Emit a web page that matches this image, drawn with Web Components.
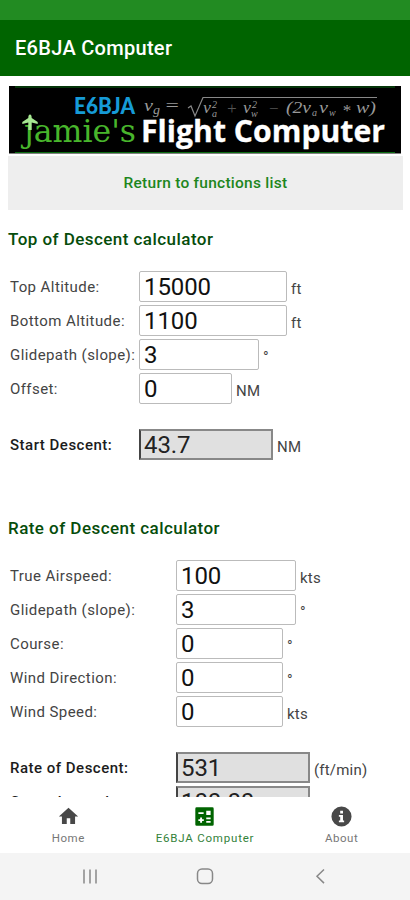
<!DOCTYPE html>
<html lang="en">
<head>
<meta charset="utf-8">
<title>E6BJA Computer</title>
<style>
  body {
    margin: 0;
    background: #fff;
    font-family: Roboto, "Liberation Sans", sans-serif;
  }
</style>
</head>
<body>
<e6b-app>
  <e6b-header slot="header">E6BJA Computer</e6b-header>

  <e6b-banner></e6b-banner>
  <e6b-button>Return to functions list</e6b-button>

  <e6b-calculator style="--label: 131px">
    <span slot="title">Top of Descent calculator</span>
    <e6b-field label="Top Altitude:" unit="ft" size="148">15000</e6b-field>
    <e6b-field label="Bottom Altitude:" unit="ft" size="148">1100</e6b-field>
    <e6b-field label="Glidepath (slope):" unit="°" size="120">3</e6b-field>
    <e6b-field label="Offset:" unit="NM" size="93">0</e6b-field>
    <e6b-field label="Start Descent:" unit="NM" size="134" result>43.7</e6b-field>
  </e6b-calculator>

  <e6b-calculator style="--label: 168px">
    <span slot="title">Rate of Descent calculator</span>
    <e6b-field label="True Airspeed:" unit="kts" size="120">100</e6b-field>
    <e6b-field label="Glidepath (slope):" unit="°" size="120">3</e6b-field>
    <e6b-field label="Course:" unit="°" size="107">0</e6b-field>
    <e6b-field label="Wind Direction:" unit="°" size="107">0</e6b-field>
    <e6b-field label="Wind Speed:" unit="kts" size="107">0</e6b-field>
    <e6b-field label="Rate of Descent:" unit="(ft/min)" size="134" result>531</e6b-field>
    <e6b-field label="Ground speed:" unit="" size="134" result next>100.00</e6b-field>
  </e6b-calculator>

  <e6b-tabs slot="footer">
    <e6b-tab icon="home">Home</e6b-tab>
    <e6b-tab icon="calc" active>E6BJA Computer</e6b-tab>
    <e6b-tab icon="info">About</e6b-tab>
  </e6b-tabs>
  <e6b-system-bar slot="footer"></e6b-system-bar>
</e6b-app>

<script>
const icons = {
  home: `<path d="M10 20.500v-6.500h4v6.500h5.500V12H23L12 2 1 12h3.500v8.500z"/>`,
  calc: `<path fill-rule="evenodd" d="M3 1.500h18a1.500 1.500 0 0 1 1.500 1.500v18a1.500 1.500 0 0 1-1.500 1.500H3A1.500 1.500 0 0 1 1.500 21V3A1.500 1.500 0 0 1 3 1.500z
    M5 7v2.200h6V7zM14 5.500v4.700h5V5.500zM7 13v2H5v2.200h2v2h2.200v-2h2V15h-2v-2zM14 13v2.200h5V13zM14 17v2.200h5V17z"/>`,
  info: `<path d="M12 .5a11.500 11.500 0 1 0 0 23 11.500 11.500 0 0 0 0-23zm-1.500 5h3.200v3h-3.200zM9 10.300h4.700v6.200H15v2H9v-2h1.500v-4.200H9z"/>`
};

class App extends HTMLElement {
  constructor() {
    super();
    this.attachShadow({ mode: "open" });
    this.shadowRoot.innerHTML = `
    <style>
        :host {
            display: flex;
            flex-direction: column;
            height: 900px;
            overflow: hidden;
        }
        main {
            flex: 1;
            min-height: 0;
            overflow: hidden;
            padding: 10px 7px 0 8px;
            box-sizing: border-box;
        }
    </style>
    <slot name="header"></slot>
    <main><slot></slot></main>
    <slot name="footer"></slot>
    `;
  }
}

class Header extends HTMLElement {
  constructor() {
    super();
    this.attachShadow({ mode: "open" });
    this.shadowRoot.innerHTML = `
    <style>
        :host {
            display: block;
            flex: none;
            border-top: 20px solid #228b22;
            background: #006400;
            color: #fff;
        }
        h1 {
            margin: 0;
            padding: 1px 15px 0;
            font-size: 20px;
            font-weight: 500;
            line-height: 55px;
            letter-spacing: 0.3px;
        }
    </style>
    <h1><slot></slot></h1>
    `;
  }
}

class Banner extends HTMLElement {
  constructor() {
    super();
    this.attachShadow({ mode: "open" });
    this.shadowRoot.innerHTML = `
    <style>
        :host { display: block; height: 68px; margin-left: 1px; }
        svg { display: block; }
        .math { font-family: "Liberation Serif", serif; font-style: italic; fill: #999; font-size: 17px; }
        .small { font-size: 10px; }
    </style>
    <svg width="392" height="68" viewBox="9 86 392 68">
      <rect x="9" y="86" width="392" height="67.500" fill="#000"/>
      <path d="M15 87H395M15 152.500H395" stroke="#0b6b12" stroke-width="1.200"/>
      <text x="74" y="114" font-family="Lato" font-weight="900" font-size="22" fill="#169bd7" textLength="61" lengthAdjust="spacingAndGlyphs">E6BJA</text>
      <g class="math">
        <text x="144" y="110.500" textLength="9" lengthAdjust="spacingAndGlyphs">v</text>
        <text x="153" y="114" font-size="12" textLength="7" lengthAdjust="spacingAndGlyphs">g</text>
        <text x="164" y="111" textLength="16" lengthAdjust="spacingAndGlyphs">=</text>
        <path d="M188 108l3-2 4 10 8-18.500H377" fill="none" stroke="#888" stroke-width="1.200"/>
        <text x="203" y="113" textLength="8" lengthAdjust="spacingAndGlyphs">v</text>
        <text x="212" y="108" class="small">2</text>
        <text x="212" y="117" class="small">a</text>
        <text x="226" y="114" fill="#555">+</text>
        <text x="243" y="113" textLength="8" lengthAdjust="spacingAndGlyphs">v</text>
        <text x="252" y="108" class="small">2</text>
        <text x="251" y="117" class="small">w</text>
        <text x="268" y="114" fill="#555">−</text>
        <text x="286" y="113" textLength="25" lengthAdjust="spacingAndGlyphs">(2v</text>
        <text x="312" y="116" class="small">a</text>
        <text x="319" y="113" textLength="9" lengthAdjust="spacingAndGlyphs">v</text>
        <text x="329" y="116" class="small">w</text>
        <text x="342" y="116">*</text>
        <text x="356" y="113" textLength="20" lengthAdjust="spacingAndGlyphs">w)</text>
      </g>
      <text x="24" y="141.500" font-family="DejaVu Serif" font-size="31" fill="#48b52c" textLength="112" lengthAdjust="spacingAndGlyphs">jamie's</text>
      <rect x="22" y="113" width="12" height="10" fill="#000"/>
      <path d="M30 114.500c1.200 0 1.700 1.500 1.700 3.500l6 4v2l-6-1.500V130h-3.400v-7.500l-6 1.500v-2l6-4c0-2 .5-3.500 1.700-3.500z" fill="#a7e892"/>
      <text x="141" y="141.500" font-family="Open Sans" font-weight="700" font-size="31" fill="#fff" stroke="#fff" stroke-width="0.300" textLength="244" lengthAdjust="spacingAndGlyphs">Flight Computer</text>
    </svg>
    `;
  }
}

class Button extends HTMLElement {
  constructor() {
    super();
    this.attachShadow({ mode: "open" });
    this.shadowRoot.innerHTML = `
    <style>
        :host {
            display: block;
            margin-top: 2px;
            background: #eee;
            color: #1d861d;
            text-align: center;
            font-size: 15.5px;
            font-weight: 500;
            line-height: 54px;
            letter-spacing: 0.26px;
        }
    </style>
    <slot></slot>
    `;
  }
}

class Calculator extends HTMLElement {
  constructor() {
    super();
    this.attachShadow({ mode: "open" });
    this.shadowRoot.innerHTML = `
    <style>
        :host { display: block; margin-bottom: 39px; }
        h2 {
            margin: 0;
            padding: 19px 0 21px;
            color: #064d0b;
            font-size: 17px;
            font-weight: 500;
            line-height: 21px;
            letter-spacing: 0.45px;
        }
        .rows { display: flex; flex-direction: column; gap: 3px; }
    </style>
    <h2><slot name="title"></slot></h2>
    <div class="rows"><slot></slot></div>
    `;
  }
}

class Field extends HTMLElement {
  constructor() {
    super();
    this.attachShadow({ mode: "open" });
    this.shadowRoot.innerHTML = `
    <style>
        :host {
            display: grid;
            grid-template-columns: var(--label) auto 1fr;
            grid-template-rows: 31px;
            height: 31px;
            color: #444;
            font-size: 15px;
        }
        :host([result]) { margin-top: 22px; }
        :host([next]) { margin-top: 0; }
        label {
            padding-left: 2px;
            line-height: 32px;
            letter-spacing: 0.42px;
            white-space: nowrap;
        }
        :host([result]) label { color: #1c1c1c; font-weight: 500; letter-spacing: 0.5px; }
        .box {
            box-sizing: border-box;
            height: 31px;
            border: 1px solid #bbb;
            border-radius: 2px;
            padding-left: 4px;
            color: #111;
            font-size: 24px;
            line-height: 31px;
            letter-spacing: -0.1px;
            white-space: nowrap;
        }
        :host([result]) .box {
            border: 2px solid #888;
            border-color: #888 #888 #888 #444;
            border-radius: 0;
            padding-left: 3px;
            background: #e0e0e0;
            color: #222;
            line-height: 29px;
        }
        .unit { padding-left: 4px; line-height: 36px; letter-spacing: 0.2px; white-space: nowrap; }
    </style>
    <label>${this.getAttribute("label")}</label>
    <div class="box" style="width: ${this.getAttribute("size")}px"><slot></slot></div>
    <span class="unit">${this.getAttribute("unit")}</span>
    `;
  }
}

class Tabs extends HTMLElement {
  constructor() {
    super();
    this.attachShadow({ mode: "open" });
    this.shadowRoot.innerHTML = `
    <style>
        :host {
            display: grid;
            flex: none;
            grid-template-columns: repeat(3, 1fr);
            height: 56px;
            background: #fff;
        }
    </style>
    <slot></slot>
    `;
  }
}

class Tab extends HTMLElement {
  constructor() {
    super();
    this.attachShadow({ mode: "open" });
    this.shadowRoot.innerHTML = `
    <style>
        :host {
            display: flex;
            flex-direction: column;
            align-items: center;
            padding-top: 9px;
            color: #777;
            font-size: 11.5px;
            line-height: 16px;
            letter-spacing: 0.5px;
            white-space: nowrap;
        }
        :host([active]) { color: #33823a; letter-spacing: 0.8px; }
        svg { margin-bottom: 3px; fill: #484848; }
        :host([active]) svg { fill: #006400; }
    </style>
    <svg width="21" height="21" viewBox="0 0 24 24">${icons[this.getAttribute("icon")]}</svg>
    <span><slot></slot></span>
    `;
  }
}

class SystemBar extends HTMLElement {
  constructor() {
    super();
    this.attachShadow({ mode: "open" });
    this.shadowRoot.innerHTML = `
    <style>
        :host {
            display: grid;
            flex: none;
            grid-template-columns: 90px 115px 115px;
            height: 47px;
            align-items: center;
            background: #f4f4f4;
        }
        svg { justify-self: end; margin-right: -10px; fill: none; stroke: #888; stroke-width: 1.5; }
    </style>
    <svg width="20" height="20"><path d="M4 2.500v14M10 2.500v14M16 2.500v14"/></svg>
    <svg width="20" height="20"><rect x="2.500" y="2" width="15" height="14.500" rx="4.500"/></svg>
    <svg width="20" height="20"><path d="M14 2.500L7 9.300l7 6.800"/></svg>
    `;
  }
}

customElements.define("e6b-app", App);
customElements.define("e6b-header", Header);
customElements.define("e6b-banner", Banner);
customElements.define("e6b-button", Button);
customElements.define("e6b-calculator", Calculator);
customElements.define("e6b-field", Field);
customElements.define("e6b-tabs", Tabs);
customElements.define("e6b-tab", Tab);
customElements.define("e6b-system-bar", SystemBar);
</script>
</body>
</html>
